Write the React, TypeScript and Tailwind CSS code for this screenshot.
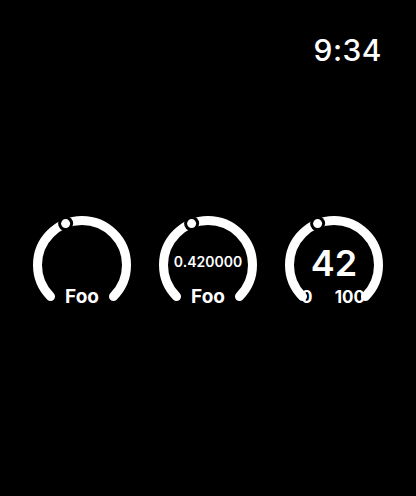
import React from 'react'

// Arc geometry for the circular gauges (270° sweep, gap at the bottom)
const SIZE = 98
const C = SIZE / 2
const R = 44.5
const START = -135
const END = 135

const pt = (deg: number) => {
  const rad = (deg * Math.PI) / 180
  return { x: C + R * Math.sin(rad), y: C - R * Math.cos(rad) }
}

const Ring = ({ value }: { value: number }) => {
  const a = pt(START)
  const b = pt(END)
  const dot = pt(START + value * (END - START))
  return (
    <svg className="absolute inset-0" width={SIZE} height={SIZE} viewBox={`0 0 ${SIZE} ${SIZE}`}>
      <path
        d={`M ${a.x} ${a.y} A ${R} ${R} 0 1 1 ${b.x} ${b.y}`}
        fill="none"
        stroke="#fff"
        strokeWidth={9}
        strokeLinecap="round"
      />
      <circle cx={dot.x} cy={dot.y} r={7.5} fill="#000" />
      <circle cx={dot.x} cy={dot.y} r={4.5} fill="#fff" />
    </svg>
  )
}

const Gauge = (props: { value: number; children?: React.ReactNode }) => {
  return (
    <div className="relative w-[98px] h-[98px]">
      <Ring value={props.value} />
      <div className="relative h-full flex flex-col items-center text-white">{props.children}</div>
    </div>
  )
}

const App = () => {
  return (
    <div
      className="w-[416px] h-[496px] bg-black text-white flex flex-col"
      style={{ fontFamily: 'Inter, "Noto Sans", sans-serif' }}
    >
      <div className="flex justify-end pr-[34px] pt-[32px]">
        <span className="text-[30px] leading-[36px] font-medium tracking-[0.5px]">9:34</span>
      </div>

      <div className="flex justify-center gap-[28px] mt-[148px]">
        <Gauge value={0.42}>
          <span className="mt-auto mb-[6px] text-[19px] leading-[22px] font-bold">Foo</span>
        </Gauge>

        <Gauge value={0.42}>
          <span className="mt-[37px] text-[14px] leading-[17px] font-semibold">0.420000</span>
          <span className="mt-auto mb-[6px] text-[19px] leading-[22px] font-bold">Foo</span>
        </Gauge>

        <Gauge value={0.42}>
          <span className="mt-[27px] text-[36px] leading-[40px] font-semibold">42</span>
          <div className="mt-auto mb-[7px] w-full flex justify-between pl-[16px] pr-[18px] text-[17px] leading-[20px] font-bold">
            <span>0</span>
            <span>100</span>
          </div>
        </Gauge>
      </div>
    </div>
  )
}

export default App
